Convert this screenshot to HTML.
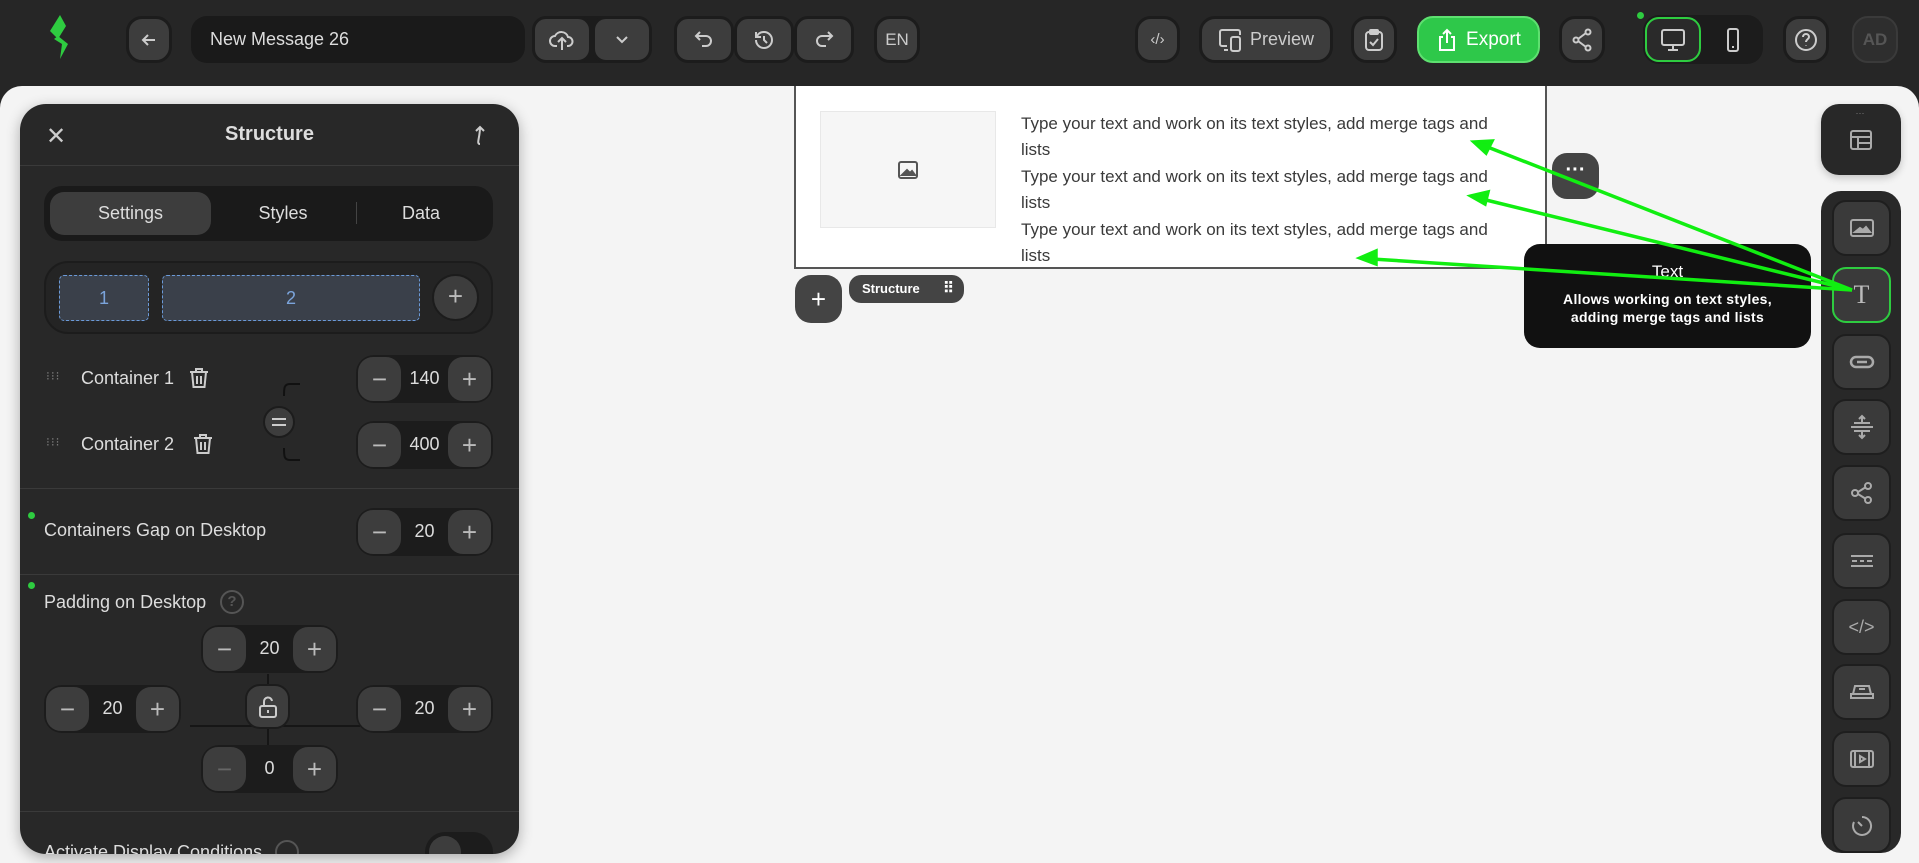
<!DOCTYPE html>
<html><head><meta charset="utf-8"><style>
*{box-sizing:border-box;margin:0;padding:0}
body{width:1919px;height:863px;overflow:hidden;background:#262626;font-family:"Liberation Sans",sans-serif;position:relative}
.a{position:absolute}
.btn{position:absolute;background:#3d3d3d;border:3px solid #1c1c1c;border-radius:14px;display:flex;align-items:center;justify-content:center;color:#ccc}
.grp{position:absolute;background:#1c1c1c;border-radius:16px}
.canvas{position:absolute;left:0;top:86px;width:1919px;height:777px;background:#f4f4f4;border-radius:22px 22px 0 0}
.panel{position:absolute;left:20px;top:104px;width:499px;height:750px;background:#282828;border-radius:26px;overflow:hidden;box-shadow:0 4px 14px rgba(0,0,0,.3);color:#ddd}
.div{position:absolute;left:0;width:100%;height:1px;background:#3a3a3a}
.step{position:absolute;width:137px;height:48px;background:#1c1c1c;border-radius:18px}
.step .m,.step .p{position:absolute;top:2px;width:43px;height:44px;background:#3d3d3d;border-radius:15px;color:#bbb;font-size:26px;display:flex;align-items:center;justify-content:center}
.step .m{left:2px}.step .p{right:2px}
.step .v{position:absolute;left:0;right:0;top:13px;text-align:center;color:#ddd;font-size:18px}
.lbl{position:absolute;font-size:18px;color:#ddd}
.dot{position:absolute;width:7px;height:7px;border-radius:50%;background:#2ecc40}
.side{position:absolute;left:1832px;width:59px;height:56px;background:#3a3a3a;border:2px solid #1e1e1e;border-radius:14px;display:flex;align-items:center;justify-content:center}
.txt{position:absolute;left:1021px;font-size:17px;color:#3a3a3a;line-height:26.4px;width:520px}
</style></head><body>
<svg class="a" style="left:46px;top:14px" width="30" height="46" viewBox="0 0 30 46"><path d="M14 1 L4 17 L12 25 L20 12 Z" fill="#2ecc40"/><path d="M12 22 L22 30 L14 45 L16 30 L8 25 Z" fill="#2ecc40"/></svg>
<div class="btn" style="left:126px;top:16px;width:46px;height:47px;border-radius:16px"><svg width="18" height="18" viewBox="0 0 18 18" fill="none" stroke="#ccc" stroke-width="2"><path d="M15 9H3M8 4L3 9l5 5"/></svg></div>
<div class="a" style="left:191px;top:16px;width:334px;height:47px;background:#1a1a1a;border-radius:16px;color:#ddd;font-size:18px;padding:13px 0 0 19px">New Message 26</div>
<div class="grp" style="left:532px;top:16px;width:120px;height:47px"></div>
<div class="btn" style="left:532px;top:16px;width:60px;height:47px"><svg width="26" height="24" viewBox="0 0 26 24" fill="none" stroke="#ccc" stroke-width="2"><path d="M8 18H6a5 5 0 010-10 7 7 0 0113 1 4.5 4.5 0 010 9h-1"/><path d="M13 22V11M9 14l4-4 4 4"/></svg></div>
<div class="btn" style="left:592px;top:16px;width:60px;height:47px"><svg width="14" height="10" viewBox="0 0 14 10" fill="none" stroke="#ccc" stroke-width="2"><path d="M2 2l5 5 5-5"/></svg></div>
<div class="btn" style="left:674px;top:16px;width:60px;height:47px"><svg width="22" height="22" viewBox="0 0 22 22" fill="none" stroke="#ccc" stroke-width="2"><path d="M7 3L3 7l4 4M3 7h10a5 5 0 010 10h-4"/></svg></div>
<div class="btn" style="left:734px;top:16px;width:60px;height:47px"><svg width="24" height="24" viewBox="0 0 24 24" fill="none" stroke="#ccc" stroke-width="2"><path d="M4 12a8 8 0 108-8 8 8 0 00-7 4M4 4v5h5M12 8v4l3 3"/></svg></div>
<div class="btn" style="left:794px;top:16px;width:60px;height:47px"><svg width="22" height="22" viewBox="0 0 22 22" fill="none" stroke="#ccc" stroke-width="2"><path d="M15 3l4 4-4 4M19 7H9a5 5 0 000 10h4"/></svg></div>
<div class="btn" style="left:874px;top:16px;width:46px;height:47px;border-radius:16px;font-size:17px">EN</div>
<div class="btn" style="left:1135px;top:16px;width:45px;height:47px;border-radius:16px;font-size:15px">‹/›</div>
<div class="btn" style="left:1199px;top:16px;width:134px;height:47px;border-radius:16px;font-size:18px;gap:6px"><svg width="26" height="26" viewBox="0 0 26 26" fill="none" stroke="#ccc" stroke-width="2"><path d="M9 19H4a2 2 0 01-2-2V5a2 2 0 012-2h16a2 2 0 012 2v3"/><rect x="13" y="10" width="9" height="14" rx="2"/><path d="M6 23h4"/></svg>Preview</div>
<div class="btn" style="left:1351px;top:16px;width:46px;height:47px;border-radius:16px"><svg width="20" height="24" viewBox="0 0 20 24" fill="none" stroke="#ccc" stroke-width="2"><rect x="2" y="4" width="16" height="18" rx="3"/><rect x="6" y="2" width="8" height="4" rx="1"/><path d="M6 14l3 3 5-6"/></svg></div>
<div class="a" style="left:1417px;top:16px;width:123px;height:47px;background:#2ec84a;border:2px solid #5ee070;border-radius:16px;color:#fff;font-size:19px;display:flex;align-items:center;justify-content:center;gap:8px"><svg width="22" height="24" viewBox="0 0 22 24" fill="none" stroke="#fff" stroke-width="2"><path d="M7 9H4v13h14V9h-3M11 15V2M7 6l4-4 4 4"/></svg>Export</div>
<div class="btn" style="left:1559px;top:16px;width:46px;height:47px;border-radius:16px"><svg width="22" height="24" viewBox="0 0 22 24" fill="none" stroke="#ccc" stroke-width="2"><circle cx="17" cy="4" r="2.5"/><circle cx="5" cy="12" r="2.5"/><circle cx="17" cy="20" r="2.5"/><path d="M7 11l8-6M7 13l8 6"/></svg></div>
<div class="dot" style="left:1637px;top:12px"></div>
<div class="grp" style="left:1643px;top:15px;width:120px;height:49px"></div>
<div class="a" style="left:1645px;top:17px;width:56px;height:45px;border:2px solid #2ecc40;border-radius:14px;background:#2a2a2a;display:flex;align-items:center;justify-content:center"><svg width="26" height="24" viewBox="0 0 26 24" fill="none" stroke="#ccc" stroke-width="2"><rect x="2" y="2" width="22" height="15" rx="2"/><path d="M13 17v5M8 22h10"/></svg></div>
<div class="a" style="left:1705px;top:17px;width:56px;height:45px;display:flex;align-items:center;justify-content:center"><svg width="14" height="26" viewBox="0 0 14 26" fill="none" stroke="#ccc" stroke-width="2"><rect x="2" y="2" width="10" height="22" rx="2"/><path d="M6 20h2"/></svg></div>
<div class="btn" style="left:1783px;top:16px;width:46px;height:47px;border-radius:16px"><svg width="24" height="24" viewBox="0 0 24 24" fill="none" stroke="#ccc" stroke-width="2"><circle cx="12" cy="12" r="10"/><path d="M9 9a3 3 0 116 0c0 2-3 2.5-3 5M12 17.5v.5"/></svg></div>
<div class="a" style="left:1852px;top:16px;width:46px;height:47px;border-radius:16px;border:2px solid #3a3a3a;background:#2e2e2e;color:#555;font-weight:bold;font-size:17px;display:flex;align-items:center;justify-content:center">AD</div>

<div class="canvas"></div>

<div class="a" style="left:794px;top:86px;width:753px;height:183px;background:#fff;border:2px solid #555;border-top:none"></div>
<div class="a" style="left:820px;top:111px;width:176px;height:117px;background:#f6f6f6;border:1px solid #e8e8e8;display:flex;align-items:center;justify-content:center"><svg width="22" height="20" viewBox="0 0 22 20" fill="none" stroke="#555" stroke-width="2"><rect x="2" y="2" width="18" height="16" rx="2"/><path d="M5 15l5-5 3 3 2-2 3 4z" fill="#555"/></svg></div>
<div class="txt" style="top:111px">Type your text and work on its text styles, add merge tags and<br>lists<br>Type your text and work on its text styles, add merge tags and<br>lists<br>Type your text and work on its text styles, add merge tags and<br>lists</div>
<div class="a" style="left:795px;top:275px;width:47px;height:48px;background:#444;border-radius:16px;color:#fff;font-size:26px;display:flex;align-items:center;justify-content:center">+</div>
<div class="a" style="left:849px;top:275px;width:115px;height:28px;background:#444;border-radius:12px;color:#fff;font-size:13px;padding:6px 0 0 13px;font-weight:bold">Structure <span style="position:absolute;right:10px;top:4px;font-size:15px">⠿</span></div>
<div class="a" style="left:1552px;top:153px;width:47px;height:46px;background:#444;border-radius:15px;color:#fff;font-size:20px;text-align:center;line-height:34px;font-weight:bold">···</div>

<div class="a" style="left:1821px;top:104px;width:80px;height:71px;background:#282828;border-radius:18px;box-shadow:0 3px 8px rgba(0,0,0,.2)"><div style="color:#777;font-size:9px;text-align:center;margin-top:4px;letter-spacing:2px">⋯</div><svg style="position:absolute;left:28px;top:25px" width="24" height="22" viewBox="0 0 24 22" fill="none" stroke="#aaa" stroke-width="2"><rect x="2" y="2" width="20" height="18" rx="2"/><path d="M2 8h20M9 8v12M9 14h13"/></svg></div>
<div class="a" style="left:1821px;top:191px;width:80px;height:662px;background:#282828;border-radius:20px"></div>
<div class="side" style="top:200px"><svg width="26" height="20" viewBox="0 0 26 20" fill="none" stroke="#aaa" stroke-width="2"><rect x="2" y="2" width="22" height="16" rx="2"/><path d="M6 14l5-4 3 2 3-3 4 5z" fill="#aaa"/></svg></div>
<div class="side" style="top:267px;border-color:#2ecc40"><span style="font-family:'Liberation Serif',serif;font-size:26px;color:#bbb">T</span></div>
<div class="side" style="top:334px"><svg width="26" height="14" viewBox="0 0 26 14" fill="none" stroke="#aaa" stroke-width="2.5"><rect x="2" y="2" width="22" height="10" rx="5"/><path d="M8 7h10"/></svg></div>
<div class="side" style="top:399px"><svg width="26" height="26" viewBox="0 0 26 26" fill="none" stroke="#aaa" stroke-width="2"><path d="M2 13h22M5 9h16M5 17h16M13 2v7M10 5l3-3 3 3M13 24v-7M10 21l3 3 3-3"/></svg></div>
<div class="side" style="top:465px"><svg width="24" height="24" viewBox="0 0 24 24" fill="none" stroke="#aaa" stroke-width="2"><circle cx="18" cy="5" r="3"/><circle cx="5" cy="12" r="3"/><circle cx="18" cy="19" r="3"/><path d="M8 11l8-5M8 13l8 5"/></svg></div>
<div class="side" style="top:533px"><svg width="26" height="16" viewBox="0 0 26 16" fill="none" stroke="#aaa" stroke-width="2"><path d="M2 3h22M2 13h22M3 8h5M11 8h4M18 8h5"/></svg></div>
<div class="side" style="top:599px;color:#aaa;font-size:18px">&lt;/&gt;</div>
<div class="side" style="top:664px"><svg width="26" height="20" viewBox="0 0 26 20" fill="none" stroke="#aaa" stroke-width="2"><path d="M6 4h14l2 8H4z"/><path d="M2 12h22v4H2zM10 7h6"/></svg></div>
<div class="side" style="top:731px"><svg width="26" height="20" viewBox="0 0 26 20" fill="none" stroke="#aaa" stroke-width="2"><rect x="2" y="2" width="22" height="16" rx="2"/><path d="M6 2v16M20 2v16M11 7v6l5-3z"/></svg></div>
<div class="side" style="top:797px"><svg width="24" height="24" viewBox="0 0 24 24" fill="none" stroke="#aaa" stroke-width="2"><path d="M12 4a9 9 0 11-8 5M12 13l-4-4"/></svg></div>

<div class="a" style="left:1524px;top:244px;width:287px;height:104px;background:#111;border-radius:16px;color:#fff;text-align:center"><div style="font-size:17px;margin-top:18px">Text</div><div style="font-size:14px;margin-top:8px;line-height:18px;font-weight:600;letter-spacing:.3px">Allows working on text styles,<br>adding merge tags and lists</div></div>

<svg class="a" style="left:0;top:0" width="1919" height="863"><g stroke="#11ee11" stroke-width="3.5" fill="#11ee11"><line x1="1852" y1="290" x2="1485" y2="146"/><line x1="1852" y1="290" x2="1482" y2="199"/><line x1="1852" y1="290" x2="1372" y2="259"/><path d="M1474 142l18-1-6 12z"/><path d="M1471 196l17-4-3 12z"/><path d="M1360 258l16-7 0 13z"/></g></svg>

<div class="panel">
 <div class="a" style="left:26px;top:18px;font-size:24px;color:#ccc">✕</div>
 <div class="a" style="left:0;width:100%;top:19px;text-align:center;font-size:20px;font-weight:bold;color:#ddd">Structure</div>
 <svg class="a" style="left:451px;top:20px" width="18" height="22" viewBox="0 0 18 22" fill="none" stroke="#ccc" stroke-width="2"><path d="M9 20c-4 0 0-6 0-17M5 7l4-4 4 4"/></svg>
 <div class="div" style="top:61px"></div>
 <div class="a" style="left:24px;top:82px;width:449px;height:55px;background:#1a1a1a;border-radius:18px"></div>
 <div class="a" style="left:30px;top:88px;width:161px;height:43px;background:#3d3d3d;border-radius:14px"></div>
 <div class="lbl" style="left:30px;width:161px;top:99px;text-align:center">Settings</div>
 <div class="lbl" style="left:210px;width:106px;top:99px;text-align:center">Styles</div>
 <div class="a" style="left:336px;top:98px;width:1px;height:22px;background:#444"></div>
 <div class="lbl" style="left:350px;width:102px;top:99px;text-align:center">Data</div>
 <div class="a" style="left:24px;top:157px;width:449px;height:73px;background:#242424;border:2px solid #1c1c1c;border-radius:24px"></div>
 <div class="a" style="left:39px;top:171px;width:90px;height:46px;background:#3a404a;border:1px dashed #6b9ad8;border-radius:5px;color:#7ba4db;font-size:18px;text-align:center;line-height:44px">1</div>
 <div class="a" style="left:142px;top:171px;width:258px;height:46px;background:#3a404a;border:1px dashed #6b9ad8;border-radius:5px;color:#7ba4db;font-size:18px;text-align:center;line-height:44px">2</div>
 <div class="a" style="left:412px;top:170px;width:47px;height:47px;background:#3d3d3d;border:2px solid #1c1c1c;border-radius:50%;color:#bbb;font-size:26px;text-align:center;line-height:41px">+</div>

 <div class="a" style="left:26px;top:265px;color:#777;font-size:12px;letter-spacing:1px">⁝⁝⁝</div>
 <div class="lbl" style="left:61px;top:264px">Container 1</div>
 <svg class="a" style="left:168px;top:262px" width="22" height="24" viewBox="0 0 22 24" fill="none" stroke="#ccc" stroke-width="2"><path d="M2 6h18M8 6V3h6v3M4 6l1.5 15h11L18 6M9 10v8M13 10v8"/></svg>
 <div class="a" style="left:26px;top:331px;color:#777;font-size:12px;letter-spacing:1px">⁝⁝⁝</div>
 <div class="lbl" style="left:61px;top:330px">Container 2</div>
 <svg class="a" style="left:172px;top:328px" width="22" height="24" viewBox="0 0 22 24" fill="none" stroke="#ccc" stroke-width="2"><path d="M2 6h18M8 6V3h6v3M4 6l1.5 15h11L18 6M9 10v8M13 10v8"/></svg>
 <svg class="a" style="left:240px;top:278px" width="60" height="82" viewBox="0 0 60 82" fill="none" stroke="#111" stroke-width="2"><path d="M40 2H30c-6 0-6 4-6 12M24 66c0 8 0 12 6 12h10"/><circle cx="19" cy="40" r="15" fill="#3d3d3d" stroke="#1c1c1c" stroke-width="2"/><path d="M12 37h14M12 43h14" stroke="#ccc"/></svg>
 <div class="step" style="left:336px;top:251px"><div class="m">−</div><div class="v">140</div><div class="p">+</div></div>
 <div class="step" style="left:336px;top:317px"><div class="m">−</div><div class="v">400</div><div class="p">+</div></div>
 <div class="div" style="top:384px"></div>
 <div class="dot" style="left:8px;top:408px"></div>
 <div class="lbl" style="left:24px;top:416px">Containers Gap on Desktop</div>
 <div class="step" style="left:336px;top:404px"><div class="m">−</div><div class="v">20</div><div class="p">+</div></div>
 <div class="div" style="top:470px"></div>
 <div class="dot" style="left:8px;top:478px"></div>
 <div class="lbl" style="left:24px;top:488px">Padding on Desktop</div>
 <div class="a" style="left:200px;top:486px;width:24px;height:24px;border:2px solid #555;border-radius:50%;color:#555;font-size:15px;text-align:center;line-height:20px;font-weight:bold">?</div>
 <svg class="a" style="left:160px;top:565px" width="200" height="110" fill="none" stroke="#111" stroke-width="1.5"><path d="M10 57h170M88 5v100"/></svg>
 <div class="step" style="left:181px;top:521px"><div class="m">−</div><div class="v">20</div><div class="p">+</div></div>
 <div class="step" style="left:24px;top:581px"><div class="m">−</div><div class="v">20</div><div class="p">+</div></div>
 <div class="a" style="left:225px;top:580px;width:45px;height:45px;background:#3d3d3d;border:2px solid #1c1c1c;border-radius:15px;display:flex;align-items:center;justify-content:center"><svg width="22" height="24" viewBox="0 0 22 24" fill="none" stroke="#ccc" stroke-width="2"><rect x="3" y="11" width="16" height="11" rx="2"/><path d="M7 11V7a4 4 0 018-1M11 15v3"/></svg></div>
 <div class="step" style="left:336px;top:581px"><div class="m">−</div><div class="v">20</div><div class="p">+</div></div>
 <div class="step" style="left:181px;top:641px"><div class="m" style="color:#666">−</div><div class="v">0</div><div class="p">+</div></div>
 <div class="div" style="top:707px"></div>
 <div class="lbl" style="left:24px;top:738px">Activate Display Conditions</div>
 <div class="a" style="left:255px;top:736px;width:24px;height:24px;border:2px solid #555;border-radius:50%"></div>
 <div class="a" style="left:405px;top:728px;width:68px;height:40px;background:#1c1c1c;border-radius:20px"><div style="margin:4px;width:32px;height:32px;border-radius:50%;background:#3d3d3d"></div></div>
</div>
</body></html>
